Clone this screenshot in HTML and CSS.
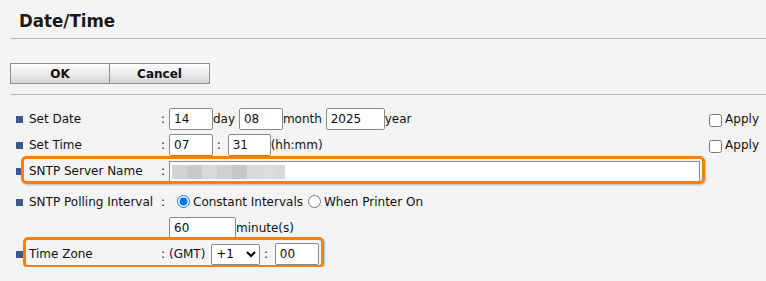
FILE: index.html
```html
<!DOCTYPE html>
<html lang="en">
  <head>
    <meta charset="UTF-8" />
    <title>Date/Time</title>
    <link rel="stylesheet" href="styles.css">
  </head>
  <body>
    <h1 class="title">Date/Time</h1>
    <hr class="rule" />

    <div class="buttons">
      <button type="button" class="btn">OK</button><button type="button" class="btn">Cancel</button>
    </div>
    <hr class="rule" />

    <!-- Settings rows -->
    <form class="settings">
      <div class="row">
        <span class="bullet"></span>
        <span class="label">Set Date</span>
        <span class="colon">:</span>
        <span class="value"><input class="box w44" value="14" />day <input class="box w44" value="08" />month <input class="box w59" value="2025" />year</span>
        <label class="apply"><input type="checkbox" />Apply</label>
      </div>

      <div class="row">
        <span class="bullet"></span>
        <span class="label">Set Time</span>
        <span class="colon">:</span>
        <span class="value"><input class="box w44" value="07" /> : <input class="box w43 push" value="31" />(hh:mm)</span>
        <label class="apply"><input type="checkbox" />Apply</label>
      </div>

      <div class="row mark mark-sntp">
        <span class="bullet"></span>
        <span class="label">SNTP Server Name</span>
        <span class="colon">:</span>
        <span class="value"><span class="field"><span class="blur"></span></span></span>
      </div>

      <div class="row row-poll">
        <span class="bullet"></span>
        <span class="label">SNTP Polling Interval</span>
        <span class="colon">:</span>
        <span class="value"><input type="radio" name="poll" class="radio first" checked />Constant Intervals<input type="radio" name="poll" class="radio" />When Printer On</span>
      </div>

      <div class="row">
        <span class="spacer"></span>
        <span class="value"><input class="box w67" value="60" />minute(s)</span>
      </div>

      <div class="row mark mark-tz">
        <span class="bullet"></span>
        <span class="label">Time Zone</span>
        <span class="colon">:</span>
        <span class="value">(GMT) <select class="pick"><option>+1</option></select> : <input class="box w44 push" value="00" /></span>
      </div>
    </form>
  </body>
</html>
```

FILE: styles.css
```css
/* General */
body {
  margin: 0;
  background-color: #f4f4f4;
  font-family: "DejaVu Sans", Verdana, sans-serif;
  font-size: 12px;
  color: #111;
}

.title {
  margin: 0 0 5px 19px;
  padding-top: 9px;
  font-size: 18.5px;
  line-height: 24px;
  font-weight: bold;
  font-stretch: condensed;
  color: #1a1a1a;
}

.rule {
  margin: 0 0 0 10px;
  border: none;
  border-top: 1px solid #b5b5b5;
  height: 0;
}

/* Buttons */
.buttons {
  display: flex;
  margin: 24px 0 10px 10px;
}
.btn {
  width: 100px;
  height: 21px;
  padding: 0;
  border: 1px solid #8e8e8e;
  background: linear-gradient(#ffffff, #e9e9e9 55%, #d6d6d6);
  font-family: inherit;
  font-size: 12px;
  font-weight: bold;
  color: #111;
}
.btn + .btn {
  border-left: none;
}

/* Rows */
.settings {
  margin: 11px 0 0;
  padding: 0 7px 0 16px;
}
.row {
  display: flex;
  align-items: center;
  height: 26px;
  position: relative;
}
.bullet {
  width: 7px;
  height: 7px;
  margin-right: 6px;
  background-color: #3b5a8a;
}
.label {
  width: 131px;
}
.spacer {
  width: 153px;
}
.colon {
  width: 9px;
  padding-left: 1px;
  box-sizing: border-box;
}
.value {
  white-space: nowrap;
}

.box {
  height: 22px;
  box-sizing: border-box;
  padding: 1px 4px;
  border: 1px solid #8a8a8a;
  border-radius: 2px;
  background: #fff;
  font-family: inherit;
  font-size: 12px;
  color: #111;
  vertical-align: middle;
  margin: 0;
}
.w43 { width: 43px; }
.w44 { width: 44px; }
.w59 { width: 59px; }
.w67 { width: 67px; }
.push { margin-left: 3px; }

.apply {
  margin-left: auto;
  display: flex;
  align-items: center;
}
.apply input {
  margin: 3px 3px 1px 3px;
}

/* SNTP server field with blurred value */
.field {
  display: block;
  width: 531px;
  height: 21px;
  box-sizing: border-box;
  border: 1px solid #8a8a8a;
  background: #fff;
  padding: 3px 2px;
}
.blur {
  display: block;
  width: 113px;
  height: 14px;
  background: linear-gradient(to right,
    #d3d3d3 0 15px, #c9c9c9 15px 30px, #d9d9d9 30px 45px,
    #d0d0d0 45px 60px, #cac7c7 60px 75px, #dadada 75px 90px,
    #dcdcdc 90px 105px, #dadada 105px);
}

/* Polling row */
.row-poll {
  margin-top: 5px;
}
.radio {
  margin: 0 3px 0 5px;
  vertical-align: -2px;
}
.radio.first {
  margin-left: 8px;
}

.pick {
  width: 49px;
  height: 21px;
  margin-left: 2px;
  font-family: inherit;
  font-size: 12px;
  vertical-align: middle;
  border: 1px solid #8a8a8a;
  border-radius: 2px;
  background: #fff;
}

/* Highlight boxes */
.mark {
  width: fit-content;
}
.mark::after {
  content: "";
  position: absolute;
  right: -5px;
  border: 3px solid #f5820c;
  border-radius: 5px;
  box-shadow: 1px 1px 2px rgba(0, 0, 0, 0.25);
}
.mark-sntp::after {
  left: 5px;
  top: -2px;
  bottom: 0;
}
.mark-tz::after {
  left: 7px;
  top: -4px;
  bottom: -1px;
}
```
